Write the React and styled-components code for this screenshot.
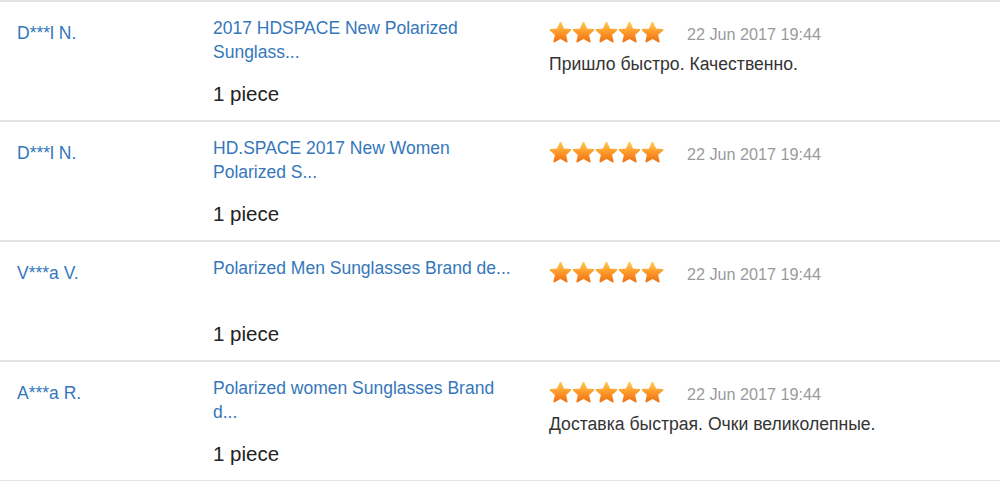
import styled, { createGlobalStyle } from "styled-components";

const GlobalStyle = createGlobalStyle`
    html, body {
        margin: 0;
        padding: 0;
        background: #fff;
    }
    body {
        font-family: "Liberation Sans", Arial, sans-serif;
    }
`;

const List = styled.div`
    width: 1000px;
    border-top: 2px solid #e2e2e2;
`;

const Row = styled.div`
    display: grid;
    grid-template-columns: 213px 336px 1fr;
    height: 118px;
    border-bottom: 2px solid #e2e2e2;
    box-sizing: content-box;
`;

const Buyer = styled.div`
    padding: 21px 0 0 17px;
    font-size: 17.5px;
    line-height: 20px;
    color: #3577bb;
`;

const Product = styled.div`
    padding-top: 14px;
`;

const Title = styled.a`
    display: block;
    width: 304px;
    height: 48px;
    font-size: 17.5px;
    line-height: 24px;
    color: #3577bb;
    text-decoration: none;
`;

const Qty = styled.div`
    margin-top: 18px;
    font-size: 20.5px;
    line-height: 24px;
    color: #222;
`;

const Feedback = styled.div`
    padding-top: 19px;
`;

const Meta = styled.div`
    display: flex;
    align-items: center;
    gap: 23px;
`;

const Stars = styled.div`
    display: flex;
`;

const Date = styled.span`
    font-size: 16.2px;
    line-height: 20px;
    color: #9a9a9a;
    padding-top: 3px;
`;

const Comment = styled.div`
    margin-top: 10px;
    font-size: 17.6px;
    line-height: 20px;
    color: #333;
`;

function Star() {
    return (
        <svg width="23" height="23" viewBox="0 0 24 24">
            <defs>
                <linearGradient id="starFill" x1="0" y1="0" x2="0" y2="1">
                    <stop offset="0" stopColor="#ffc850" />
                    <stop offset="0.5" stopColor="#fd9a2a" />
                    <stop offset="1" stopColor="#ef7314" />
                </linearGradient>
            </defs>
            <polygon
                points="12,1.8 15.1,8.6 22.4,9.3 16.9,14.2 18.5,21.5 12,17.7 5.5,21.5 7.1,14.2 1.6,9.3 8.9,8.6"
                fill="url(#starFill)"
                stroke="url(#starFill)"
                strokeWidth="1.8"
                strokeLinejoin="round"
            />
        </svg>
    );
}

const reviews = [
    {
        buyer: "D***l N.",
        title: "2017 HDSPACE New Polarized Sunglass...",
        comment: "Пришло быстро. Качественно.",
    },
    {
        buyer: "D***l N.",
        title: "HD.SPACE 2017 New Women Polarized S...",
        comment: "",
    },
    {
        buyer: "V***a V.",
        title: "Polarized Men Sunglasses Brand de...",
        comment: "",
    },
    {
        buyer: "A***a R.",
        title: "Polarized women Sunglasses Brand d...",
        comment: "Доставка быстрая. Очки великолепные.",
    },
];

export default function App() {
    return (
        <>
            <GlobalStyle />
            <List>
                {reviews.map((r, i) => (
                    <Row key={i}>
                        <Buyer>{r.buyer}</Buyer>
                        <Product>
                            <Title href="#">{r.title}</Title>
                            <Qty>1 piece</Qty>
                        </Product>
                        <Feedback>
                            <Meta>
                                <Stars>
                                    {[0, 1, 2, 3, 4].map((s) => (
                                        <Star key={s} />
                                    ))}
                                </Stars>
                                <Date>22 Jun 2017 19:44</Date>
                            </Meta>
                            {r.comment && <Comment>{r.comment}</Comment>}
                        </Feedback>
                    </Row>
                ))}
            </List>
        </>
    );
}
